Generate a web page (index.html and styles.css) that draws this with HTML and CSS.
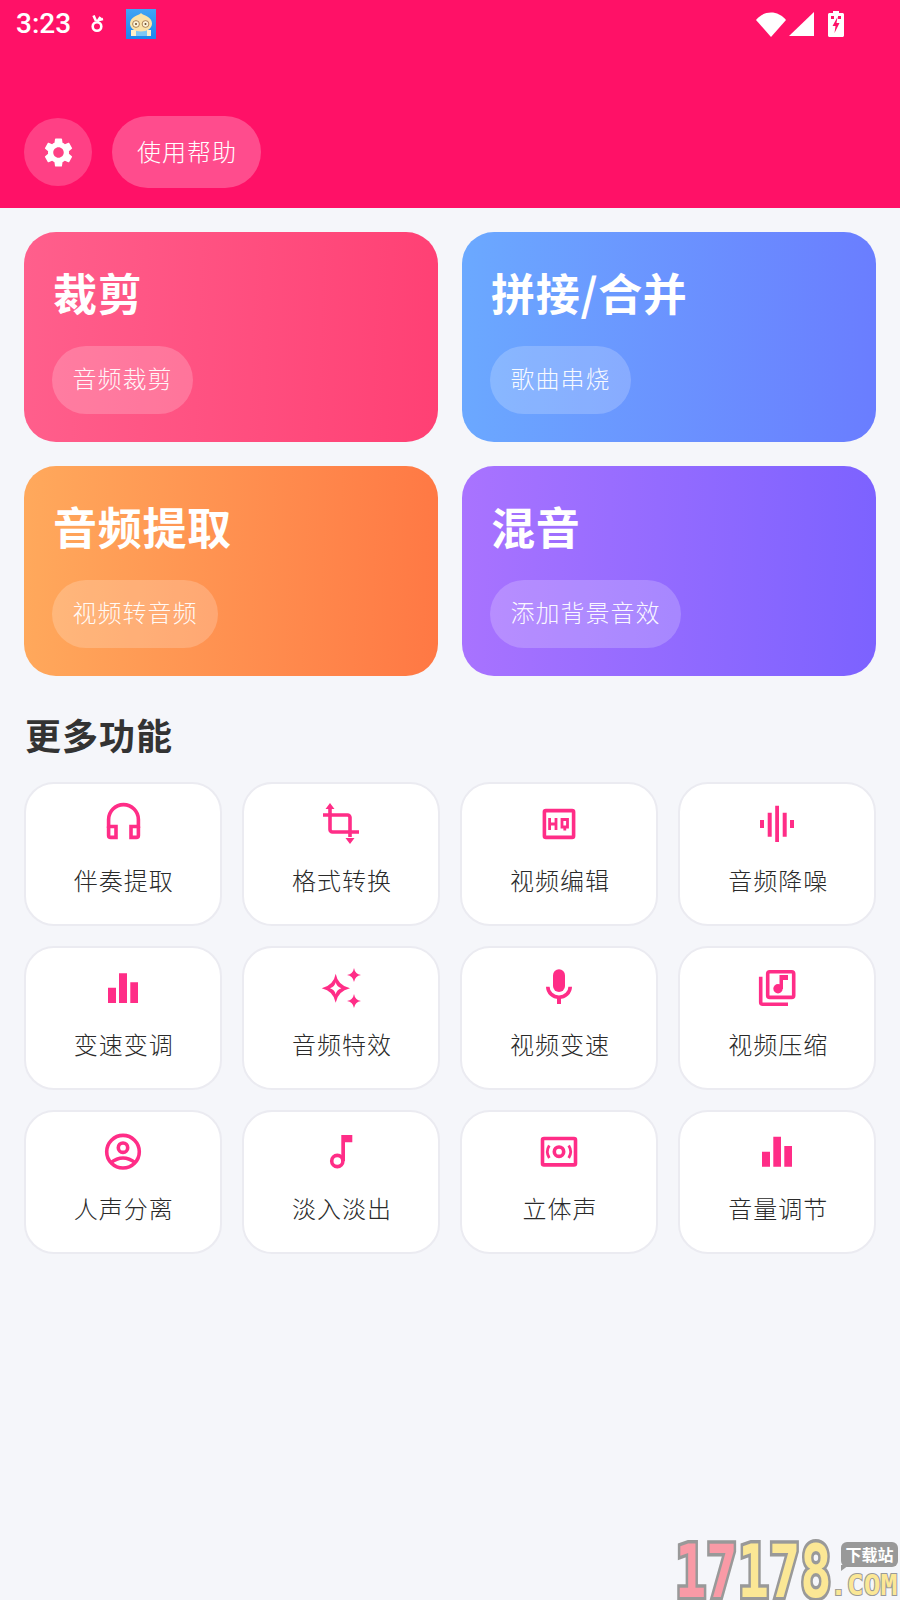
FILE: index.html
```html
<!DOCTYPE html>
<html lang="zh">
<head>
<meta charset="utf-8">
<title>音频编辑</title>
<link rel="stylesheet" href="styles.css">
</head>
<body>
<div class="app">
  <header class="header">
    <div class="status">
      <span class="time">3:23</span>
      <svg class="st-bunny" viewBox="0 0 14 20"><path d="M3.500 1.500 6 7M10.500 3 7.500 7.500" class="bunny-line"/><circle cx="7" cy="12.500" r="4.300" class="bunny-line"/><path d="M9 6 13 5" class="bunny-line"/></svg>
      <svg class="st-app" viewBox="0 0 30 30">
        <defs><linearGradient id="appbg" x1="0" y1="0" x2="0" y2="1"><stop offset="0" stop-color="#41a5f5"/><stop offset="1" stop-color="#1c86ee"/></linearGradient></defs>
        <rect width="30" height="30" fill="url(#appbg)"/>
        <path d="M5 21h20v6H5z" fill="#fdf0c8"/>
        <rect x="10" y="21" width="11" height="6" fill="#7cc8f5"/>
        <path d="M15 4c2 2.500 11 3.500 11 10.500 0 5-5 8-11 8s-11-3-11-8C4 7.500 13 6.500 15 4z" fill="#fbe3a8"/>
        <circle cx="10" cy="15" r="3.400" fill="#fdf3d6" stroke="#9a6b3f" stroke-width=".8"/>
        <circle cx="19.500" cy="15" r="3.400" fill="#fdf3d6" stroke="#9a6b3f" stroke-width=".8"/>
        <circle cx="10" cy="15" r="1" fill="#6b4a2a"/>
        <circle cx="19.500" cy="15" r="1" fill="#6b4a2a"/>
      </svg>
      <span class="st-space"></span>
      <svg class="st-wifi" viewBox="0 0 30 25"><path d="M0 8C8-2 22-2 30 8L15 25z" fill="#fff"/></svg>
      <svg class="st-signal" viewBox="0 0 25 24"><path d="M25 0V24H0z" fill="#fff"/></svg>
      <svg class="st-batt" viewBox="0 0 16 26"><path d="M5 0h6v2h3.500c.8 0 1.500.7 1.500 1.500V24.500c0 .8-.7 1.500-1.500 1.500h-13C.7 26 0 25.300 0 24.500V3.500C0 2.700.7 2 1.500 2H5z" fill="#fff"/><path d="M9.500 6 4.500 15h3l-1 7 5-10h-3z" fill="#ff1167"/><path d="M3 5h3v3H3zM10 5h3v3h-3z" fill="#ff1167"/></svg>
    </div>
    <div class="actions">
      <div class="gear-btn">
        <svg class="gear" viewBox="0 0 24 24"><path fill="#fff" d="M19.14 12.94c.04-.3.06-.61.06-.94 0-.32-.02-.64-.07-.94l2.03-1.58c.18-.14.23-.41.12-.61l-1.92-3.32c-.12-.22-.37-.29-.59-.22l-2.39.96c-.5-.38-1.03-.7-1.62-.94l-.36-2.54c-.04-.24-.24-.41-.48-.41h-3.84c-.24 0-.43.17-.47.41l-.36 2.54c-.59.24-1.13.57-1.62.94l-2.39-.96c-.22-.08-.47 0-.59.22L2.74 8.87c-.12.21-.08.47.12.61l2.03 1.58c-.05.3-.09.63-.09.94s.02.64.07.94l-2.03 1.58c-.18.14-.23.41-.12.61l1.92 3.32c.12.22.37.29.59.22l2.39-.96c.5.38 1.03.7 1.62.94l.36 2.54c.05.24.24.41.48.41h3.84c.24 0 .44-.17.47-.41l.36-2.54c.59-.24 1.13-.56 1.62-.94l2.39.96c.22.08.47 0 .59-.22l1.92-3.32c.12-.22.07-.47-.12-.61l-2.01-1.58zM12 15.600c-1.980 0-3.600-1.620-3.600-3.600s1.620-3.600 3.600-3.600 3.600 1.620 3.600 3.600-1.620 3.600-3.600 3.600z"/></svg>
      </div>
      <div class="help-btn">使用帮助</div>
    </div>
  </header>

  <main class="main">
    <section class="features">
      <div class="feature f-pink"><div class="f-title">裁剪</div><div class="f-pill">音频裁剪</div></div>
      <div class="feature f-blue"><div class="f-title">拼接/合并</div><div class="f-pill">歌曲串烧</div></div>
      <div class="feature f-orange"><div class="f-title">音频提取</div><div class="f-pill">视频转音频</div></div>
      <div class="feature f-purple"><div class="f-title">混音</div><div class="f-pill">添加背景音效</div></div>
    </section>

    <h2 class="more-title">更多功能</h2>

    <section class="tools">
      <div class="tool">
        <svg class="ico" viewBox="0 0 44 44"><path class="ln" d="M7.600 30V21.500a14.900 14.900 0 0 1 29.800 0V30"/><path class="ln" d="M7.600 28.500H15V39.400H9.600a2 2 0 0 1-2-2V28.500M37.400 28.500H30V39.400h5.400a2 2 0 0 0 2-2V28.500"/></svg>
        <div class="label">伴奏提取</div>
      </div>
      <div class="tool">
        <svg class="ico" viewBox="0 0 44 44"><path class="ln" d="M11 9V31.500a2.500 2.500 0 0 0 2.500 2.500H40M4 17H28.500a2.500 2.500 0 0 1 2.500 2.500V39"/><path class="fl" d="M11 5 6.500 11h9zM31 46l-4.500-6h9z"/></svg>
        <div class="label">格式转换</div>
      </div>
      <div class="tool">
        <svg class="ico" viewBox="0 0 44 44"><rect class="ln" x="7.400" y="12.600" width="29.200" height="26.800" rx="1.500"/><path class="ln2" d="M12.600 20v12M19 20v12M12.600 26H19M25 21.500h5.500v7.500H25zM27.800 29v3.500"/></svg>
        <div class="label">视频编辑</div>
      </div>
      <div class="tool">
        <svg class="ico" viewBox="0 0 44 44"><path class="fl" d="M5 22h4v8H5zM12.700 14.700h4v24h-4zM20.200 7.700h3.800V44h-3.800zM27.700 14.700h4v24h-4zM35 22h4v8h-4z"/></svg>
        <div class="label">音频降噪</div>
      </div>

      <div class="tool">
        <svg class="ico" viewBox="0 0 44 44"><path class="fl" d="M7 25.700h8V41H7zM18 11.300h8V41h-8zM29.300 20.300H37V41h-7.700z"/></svg>
        <div class="label">变速变调</div>
      </div>
      <div class="tool">
        <svg class="ico" viewBox="0 0 44 44"><path class="fl" fill-rule="evenodd" d="M16.700 11.800Q18.800 23.500 31 26.300 18.800 29.100 16.700 40.800 14.600 29.100 2.700 26.300 14.600 23.500 16.700 11.800zM16.700 20.300Q15.800 24.800 11 26.300 15.800 27.800 16.700 32.300 17.600 27.800 22.400 26.300 17.600 24.800 16.700 20.300z"/><path class="fl" d="M35 6Q36 12 42 13 36 14 35 20 34 14 28 13 34 12 35 6zM35 32Q36 38 42 39 36 40 35 46 34 40 28 39 34 38 35 32z"/></svg>
        <div class="label">音频特效</div>
      </div>
      <div class="tool">
        <svg class="ico" viewBox="0 0 44 44"><rect class="fl" x="16" y="7.300" width="12" height="22.700" rx="6"/><path class="ln" d="M10.800 24.700a11.200 10.500 0 0 0 22.400 0"/><path class="fl" d="M20 34h4v8h-4z"/></svg>
        <div class="label">视频变速</div>
      </div>
      <div class="tool">
        <svg class="ico" viewBox="0 0 44 44"><rect class="ln" x="12.700" y="9.700" width="26" height="25.700" rx="2"/><path class="ln" d="M5.700 14.700V40.300a2 2 0 0 0 2 2H33"/><circle class="fl" cx="23" cy="26.700" r="4.700"/><path class="fl" d="M24.500 13H33v5h-5v9h-3.500z"/></svg>
        <div class="label">视频压缩</div>
      </div>

      <div class="tool">
        <svg class="ico" viewBox="0 0 44 44"><circle class="ln" cx="22" cy="25.700" r="16.300"/><circle class="ln" cx="22" cy="21.700" r="4.700"/><path class="ln" d="M9.500 37Q22 27 34.500 37"/></svg>
        <div class="label">人声分离</div>
      </div>
      <div class="tool">
        <svg class="ico" viewBox="0 0 44 44"><circle class="ln" cx="18.300" cy="35" r="5.600"/><path class="fl" d="M22.300 9H33.300V16.300H26V35H22.300z"/></svg>
        <div class="label">淡入淡出</div>
      </div>
      <div class="tool">
        <svg class="ico" viewBox="0 0 44 44"><rect class="ln" x="5.500" y="12.500" width="33" height="26.400" rx="1.500"/><circle class="ln" cx="22" cy="25.700" r="4.700"/><path class="ln3" d="M12.300 19.500a11.500 11.500 0 0 0 0 12.400M31.700 19.500a11.500 11.500 0 0 1 0 12.400"/></svg>
        <div class="label">立体声</div>
      </div>
      <div class="tool">
        <svg class="ico" viewBox="0 0 44 44"><path class="fl" d="M7 25.700h8V40.700H7zM18.300 10.700H26V40.700H18.300zM29.300 20H37V40.700H29.300z"/></svg>
        <div class="label">音量调节</div>
      </div>
    </section>
  </main>

  <div class="mark">
    <span class="mark-num"><span class="m-pink">17</span><span class="m-yel">178</span></span>
    <span class="mark-tag">下载站</span>
    <span class="mark-com">.COM</span>
  </div>
</div>
</body>
</html>
```
FILE: styles.css
```css
* { box-sizing: border-box; }
html, body { margin: 0; padding: 0; }
body {
  background: #f5f6fa;
  font-family: "Noto Sans CJK SC", "Noto Sans", sans-serif;
}
.app {
  position: relative;
  width: 900px;
  height: 1600px;
  overflow: hidden;
  background: #f5f6fa;
}

/* header */
.header {
  height: 208px;
  background: #ff1167;
  display: flex;
  flex-direction: column;
  justify-content: space-between;
  padding: 0 24px 20px;
}
.status {
  height: 48px;
  margin-left: -8px;
  display: flex;
  align-items: center;
  color: #fff;
}
.time {
  font-family: Roboto, sans-serif;
  font-weight: 500;
  font-size: 28px;
  line-height: 48px;
  width: 74px;
}
.st-bunny { width: 14px; height: 20px; margin-right: 22px; }
.bunny-line { fill: none; stroke: #fff; stroke-width: 2.6; }
.st-app { width: 30px; height: 30px; }
.st-space { flex: 1; }
.st-wifi { width: 30px; height: 25px; margin-right: 3px; }
.st-signal { width: 25px; height: 24px; margin-right: 14px; }
.st-batt { width: 16px; height: 26px; margin-right: 32px; }

.actions { display: flex; align-items: center; gap: 20px; }
.gear-btn {
  width: 68px;
  height: 68px;
  border-radius: 50%;
  background: rgba(255, 255, 255, 0.2);
  display: flex;
  align-items: center;
  justify-content: center;
}
.gear { width: 35px; height: 35px; }
.help-btn {
  height: 72px;
  width: 149px;
  border-radius: 36px;
  background: rgba(255, 255, 255, 0.25);
  color: #fff;
  font-size: 24px;
  font-weight: 300;
  letter-spacing: 1px;
  line-height: 70px;
  padding-left: 1px;
  text-align: center;
}

/* main */
.main { padding: 24px 24px 0; }
.features {
  display: grid;
  grid-template-columns: 414px 414px;
  grid-auto-rows: 210px;
  gap: 24px;
}
.feature {
  border-radius: 32px;
  padding: 30px 28px 0;
  color: #fff;
}
.f-pink { background: linear-gradient(92deg, #ff5f8c, #ff4074); }
.f-blue { background: linear-gradient(92deg, #6ba9ff, #6a7dff); }
.f-orange { background: linear-gradient(92deg, #ffa95c, #ff7844); }
.f-purple { background: linear-gradient(92deg, #a973ff, #7c62ff); }
.f-title {
  font-size: 44px;
  font-weight: 700;
  line-height: 60px;
  margin-left: 1px;
  letter-spacing: 0.7px;
}
.f-pill {
  display: inline-block;
  margin-top: 24px;
  height: 68px;
  line-height: 64px;
  padding: 0 20.5px;
  border-radius: 34px;
  background: rgba(255, 255, 255, 0.2);
  color: rgba(255, 255, 255, 0.95);
  font-size: 24px;
  font-weight: 300;
  letter-spacing: 1px;
}

.more-title {
  margin: 33px 0 23px 1px;
  font-size: 36px;
  line-height: 50px;
  font-weight: 700;
  letter-spacing: 1px;
  color: #333;
}

.tools {
  display: grid;
  grid-template-columns: repeat(4, 1fr);
  grid-auto-rows: 144px;
  column-gap: 20.5px;
  row-gap: 20px;
}
.tool {
  background: #fff;
  border: 2px solid #ebebf1;
  border-radius: 30px;
  padding-top: 14px;
  display: flex;
  flex-direction: column;
  align-items: center;
}
.ico { width: 44px; height: 44px; overflow: visible; flex: none; }
.ln { fill: none; stroke: #ff2d87; stroke-width: 3.6; }
.ln2 { fill: none; stroke: #ff2d87; stroke-width: 2.8; }
.ln3 { fill: none; stroke: #ff2d87; stroke-width: 2.8; }
.fl { fill: #ff2d87; }
.label {
  margin-top: 21px;
  padding-left: 2px;
  font-size: 24px;
  font-weight: 300;
  line-height: 34px;
  letter-spacing: 1px;
  color: #2a2a2a;
}

/* watermark */
.mark {
  position: absolute;
  left: 672px;
  top: 1530px;
  width: 228px;
  height: 70px;
}
.mark-num {
  position: absolute;
  left: 3px;
  top: 0;
  font-family: "DejaVu Sans Mono", monospace;
  font-weight: 700;
  font-size: 52px;
  line-height: 70px;
  transform: translateY(14px) scaleY(1.39);
  transform-origin: 50% 75%;
  -webkit-text-stroke: 5px #999;
  paint-order: stroke fill;
  white-space: nowrap;
}
.m-pink { color: #f99aa6; }
.m-yel { color: #fbe795; }
.mark-tag {
  position: absolute;
  left: 169px;
  top: 12px;
  width: 57px;
  height: 25px;
  border-radius: 6px;
  background: #999;
  color: #fff;
  font-size: 16px;
  font-weight: 700;
  line-height: 25px;
  text-align: center;
}
.mark-tag::after {
  content: "";
  position: absolute;
  left: 0;
  bottom: -4px;
  border-left: 8px solid #999;
  border-bottom: 6px solid transparent;
}
.mark-com {
  position: absolute;
  left: 158px;
  top: 41px;
  font-family: "DejaVu Sans Mono", monospace;
  font-weight: 700;
  font-size: 28px;
  line-height: 29px;
  color: #fbe795;
  -webkit-text-stroke: 2px #999;
  paint-order: stroke fill;
  white-space: nowrap;
}
```
